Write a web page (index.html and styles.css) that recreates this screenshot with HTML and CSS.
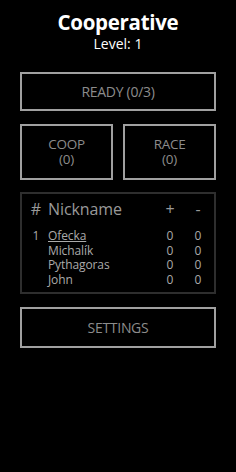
FILE: index.html
```html
<!DOCTYPE html>
<html>
<head>
<meta name="viewport" content="width=device-width, initial-scale=1.0">
<title>Cooperative</title>
<link rel="stylesheet" href="styles.css">
</head>
<body>
<div class="mainHolder">
	<div class="title">
		<h1>Cooperative</h1>
		<p class="level">Level: 1</p>
	</div>
	<div class="btn ready">READY (0/3)</div>
	<div class="modes">
		<div class="btn mode"><span>COOP</span><span>(0)</span></div>
		<div class="btn mode"><span>RACE</span><span>(0)</span></div>
	</div>
	<div class="players">
		<div class="row head">
			<span class="num">#</span>
			<span class="nick">Nickname</span>
			<span class="score">+</span>
			<span class="score">-</span>
		</div>
		<div class="row">
			<span class="num">1</span>
			<span class="nick me">Ofecka</span>
			<span class="score">0</span>
			<span class="score">0</span>
		</div>
		<div class="row">
			<span class="num"></span>
			<span class="nick">Michalík</span>
			<span class="score">0</span>
			<span class="score">0</span>
		</div>
		<div class="row">
			<span class="num"></span>
			<span class="nick">Pythagoras</span>
			<span class="score">0</span>
			<span class="score">0</span>
		</div>
		<div class="row">
			<span class="num"></span>
			<span class="nick">John</span>
			<span class="score">0</span>
			<span class="score">0</span>
		</div>
	</div>
	<div class="btn settings">SETTINGS</div>
</div>
</body>
</html>
```

FILE: styles.css
```css
html, body, div, span, h1, p {
	margin: 0;
	padding: 0;
	border: 0;
	font: inherit;
}
body {
	background: #000;
	color: #fff;
	font-family: "Open Sans", "Noto Sans", sans-serif;
	font-size: 14px;
}
.mainHolder {
	width: 196px;
	margin: 0 auto;
	padding-top: 9px;
}
.title {
	text-align: center;
}
.title h1 {
	font-size: 20.5px;
	font-weight: bold;
	line-height: 26px;
	letter-spacing: -0.3px;
}
.level {
	font-size: 14px;
	line-height: 17px;
}
.btn {
	box-sizing: border-box;
	border: 2px solid #a0a0a0;
	color: #8c8c8c;
	text-align: center;
	display: flex;
	flex-direction: column;
	align-items: center;
	justify-content: center;
	letter-spacing: -0.3px;
}
.ready {
	height: 39px;
	margin-top: 20px;
}
.modes {
	display: flex;
	gap: 10px;
	margin-top: 13px;
}
.mode {
	flex: 1;
	height: 56px;
	font-size: 13.5px;
	line-height: 15px;
}
.mode span {
	display: block;
	height: 15px;
}
.players {
	box-sizing: border-box;
	height: 102px;
	margin-top: 12px;
	border: 2px solid #2e2e2e;
	padding: 4px 0 0 7px;
	color: #aaa;
}
.row {
	display: flex;
	font-size: 12px;
	line-height: 14.5px;
	height: 14.5px;
}
.row.head {
	font-size: 16px;
	line-height: 22px;
	height: 22px;
	margin-bottom: 9px;
	color: #999;
}
.num {
	width: 14px;
	margin-right: 5px;
	text-align: center;
}
.nick {
	width: 108px;
	letter-spacing: -0.1px;
}
.me {
	text-decoration: underline;
}
.score {
	width: 28px;
	text-align: center;
}
.settings {
	height: 41px;
	margin-top: 13px;
}
```
